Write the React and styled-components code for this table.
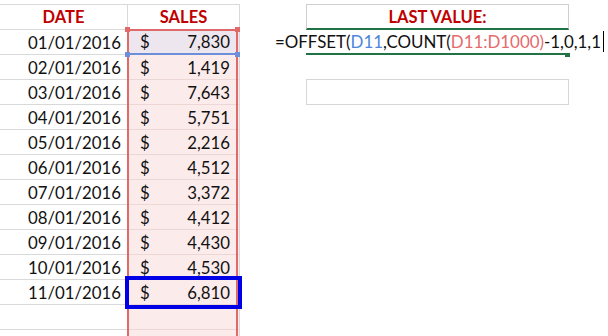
import React from "react";
import styled, { createGlobalStyle } from "styled-components";

const GlobalStyle = createGlobalStyle`
  html, body {
    margin: 0;
    padding: 0;
    background: #ffffff;
    overflow: hidden;
  }
  body {
    font-family: Lato, "Open Sans", "Liberation Sans", sans-serif;
    color: #111111;
  }
`;

const Page = styled.div`
  display: flex;
  align-items: flex-start;
  width: 608px;
  height: 336px;
  padding-top: 4px;
  box-sizing: border-box;
  overflow: hidden;
`;

const Sheet = styled.div`
  display: flex;
  border-top: 1px solid #d9d9d9;
`;

const Column = styled.div`
  display: flex;
  flex-direction: column;
  width: ${(p) => p.$width}px;
  box-sizing: border-box;
  border-right: 1px solid #d9d9d9;
`;

const HeaderCell = styled.div`
  height: 25px;
  box-sizing: border-box;
  border-bottom: 1px solid #d9d9d9;
  display: flex;
  align-items: center;
  justify-content: center;
  font-weight: 700;
  font-size: 16.5px;
  color: #c00000;
  background: #ffffff;
`;

const DateCell = styled.div`
  height: 25px;
  box-sizing: border-box;
  border-bottom: 1px solid #d9d9d9;
  display: flex;
  align-items: center;
  justify-content: flex-end;
  padding-right: 6px;
  font-size: 16.8px;
`;

const RangeBody = styled.div`
  position: relative;
  display: flex;
  flex-direction: column;
  background: #fcebeb;

  &::after {
    content: "";
    position: absolute;
    top: -1px;
    left: -1px;
    right: 1px;
    bottom: 0;
    border: 2px solid #e06a6a;
    border-bottom: none;
    pointer-events: none;
  }
`;

const Handle = styled.span`
  position: absolute;
  width: 5px;
  height: 5px;
  background: ${(p) => p.$color};
  z-index: 3;
  ${(p) => (p.$top ? "top: -3px;" : "bottom: -4px;")}
  ${(p) => (p.$left ? "left: -3px;" : "right: -1px;")}
`;

const SalesCell = styled.div`
  position: relative;
  height: 25px;
  box-sizing: border-box;
  border-bottom: ${(p) => (p.$ref ? "2px solid #6d8fd9" : "1px solid #ecd6d6")};
  background: ${(p) => (p.$ref ? "#eee6ef" : "transparent")};
  display: flex;
  align-items: center;
  justify-content: space-between;
  padding: 0 9px 0 12px;
  font-size: 16.8px;
`;

const Dollar = styled.span``;
const Amount = styled.span``;

const Highlight = styled.div`
  position: absolute;
  top: -4px;
  left: -3px;
  right: -3px;
  bottom: -5px;
  border: 4px solid #0000e6;
  pointer-events: none;
  z-index: 4;
`;

const RightPane = styled.div`
  flex: 1;
  display: flex;
  flex-direction: column;
`;

const LabelCell = styled.div`
  margin-left: 66px;
  width: 263px;
  height: 26px;
  box-sizing: border-box;
  border: 1px solid #cfcfcf;
  border-bottom: 2px solid #217346;
  display: flex;
  align-items: center;
  justify-content: center;
  font-weight: 700;
  font-size: 16.5px;
  color: #c00000;
`;

const FormulaBar = styled.div`
  height: 23px;
  padding-left: 35px;
  display: flex;
  align-items: center;
  background: #ffffff;
  font-size: 16.9px;
  white-space: nowrap;
`;

const Ref = styled.span`
  color: ${(p) => p.$color};
`;

const Caret = styled.span`
  display: inline-block;
  width: 1px;
  height: 21px;
  margin-left: 2px;
  background: #000000;
`;

const EditEdge = styled.div`
  position: relative;
  margin-left: 66px;
  width: 263px;
  height: 2px;
  background: #217346;

  &::after {
    content: "";
    position: absolute;
    right: -1px;
    top: 0;
    width: 5px;
    height: 4px;
    background: #217346;
  }
`;

const EmptyCell = styled.div`
  margin-top: 24px;
  margin-left: 66px;
  width: 263px;
  height: 26px;
  box-sizing: border-box;
  border: 1px solid #d6d6d6;
`;

const rows = [
  ["01/01/2016", "7,830"],
  ["02/01/2016", "1,419"],
  ["03/01/2016", "7,643"],
  ["04/01/2016", "5,751"],
  ["05/01/2016", "2,216"],
  ["06/01/2016", "4,512"],
  ["07/01/2016", "3,372"],
  ["08/01/2016", "4,412"],
  ["09/01/2016", "4,430"],
  ["10/01/2016", "4,530"],
  ["11/01/2016", "6,810"],
];

const EXTRA = 2;

export default function App() {
  return (
    <>
      <GlobalStyle />
      <Page>
        <Sheet>
          <Column $width={128}>
            <HeaderCell>DATE</HeaderCell>
            {rows.map(([d]) => (
              <DateCell key={d}>{d}</DateCell>
            ))}
            {Array.from({ length: EXTRA }).map((_, i) => (
              <DateCell key={"e" + i} />
            ))}
          </Column>
          <Column $width={112}>
            <HeaderCell>SALES</HeaderCell>
            <RangeBody>
              <Handle $color="#e06a6a" $top $left />
              <Handle $color="#e06a6a" $top />
              {rows.map(([d, v], i) => (
                <SalesCell key={d} $ref={i === 0}>
                  <Dollar>$</Dollar>
                  <Amount>{v}</Amount>
                  {i === 0 && (
                    <>
                      <Handle $color="#6d8fd9" $left />
                      <Handle $color="#6d8fd9" />
                    </>
                  )}
                  {i === rows.length - 1 && <Highlight />}
                </SalesCell>
              ))}
              {Array.from({ length: EXTRA }).map((_, i) => (
                <SalesCell key={"e" + i} />
              ))}
            </RangeBody>
          </Column>
        </Sheet>
        <RightPane>
          <LabelCell>LAST VALUE:</LabelCell>
          <FormulaBar>
            =OFFSET(<Ref $color="#4f86dc">D11</Ref>,COUNT(
            <Ref $color="#e46c6c">D11:D1000</Ref>
            <Ref $color="#e46c6c">)</Ref>-1,0,1,1
            <Caret />
          </FormulaBar>
          <EditEdge />
          <EmptyCell />
        </RightPane>
      </Page>
    </>
  );
}
